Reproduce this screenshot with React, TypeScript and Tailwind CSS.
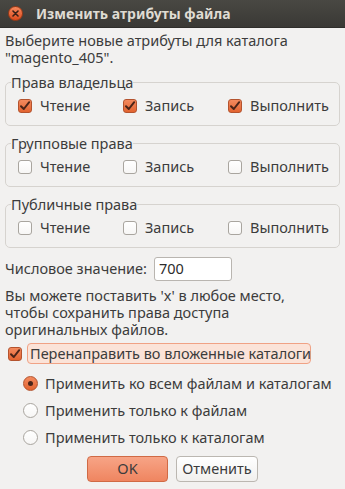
import React from "react";

const font = { fontFamily: '"Noto Sans", "Open Sans", sans-serif' };

function Check({ checked }: { checked: boolean }) {
  if (checked) {
    return (
      <span className="inline-flex w-[14px] h-[14px] shrink-0 rounded-[3px] border border-[#b4532e] bg-gradient-to-b from-[#f38a5e] to-[#e2632f] items-center justify-center">
        <svg width="12" height="12" viewBox="0 0 12 12">
          <path d="M2 6.2 L4.8 9 L10.2 2.2" fill="none" stroke="#4a2418" strokeWidth="2" strokeLinecap="round" strokeLinejoin="round" />
        </svg>
      </span>
    );
  }
  return (
    <span className="inline-block w-[14px] h-[14px] shrink-0 rounded-[3px] border border-[#a9a59f] bg-gradient-to-b from-[#ffffff] to-[#f7f6f5]" />
  );
}

function Radio({ checked }: { checked: boolean }) {
  if (checked) {
    return (
      <span className="inline-flex w-[15px] h-[15px] shrink-0 rounded-full border border-[#b4532e] bg-gradient-to-b from-[#f38a5e] to-[#e2632f] items-center justify-center">
        <span className="w-[5px] h-[5px] rounded-full bg-[#4a2418]" />
      </span>
    );
  }
  return (
    <span className="inline-block w-[15px] h-[15px] shrink-0 rounded-full border border-[#a9a59f] bg-gradient-to-b from-[#ffffff] to-[#f7f6f5]" />
  );
}

function Group({ title, checked }: { title: string; checked: boolean }) {
  const items = [
    { label: "Чтение", w: "w-[105px]" },
    { label: "Запись", w: "w-[105px]" },
    { label: "Выполнить", w: "" },
  ];
  return (
    <fieldset className="border border-[#d6d3cf] rounded-[5px] mx-[5px] pl-[12px] pt-[7px] pb-[10px]">
      <legend className="ml-[-7px] px-0 leading-[16px]">{title}</legend>
      <div className="flex items-center h-[18px]">
        {items.map((it) => (
          <div key={it.label} className={`flex items-center gap-[8px] ${it.w}`}>
            <Check checked={checked} />
            <span>{it.label}</span>
          </div>
        ))}
      </div>
    </fieldset>
  );
}

export default function App() {
  return (
    <div style={font} className="w-[345px] h-[489px] bg-[#f2f1f0] text-[#3c3c3c] text-[14.5px] whitespace-nowrap flex flex-col overflow-hidden">
      <div className="h-[28px] shrink-0 flex items-center bg-gradient-to-b from-[#494843] to-[#3a3935] border-b border-[#2f2e2b]">
        <span className="ml-[8px] w-[15px] h-[15px] rounded-full bg-gradient-to-b from-[#f6875b] to-[#dc4a1a] border border-[#9b3a16] flex items-center justify-center">
          <svg width="7" height="7" viewBox="0 0 7 7">
            <path d="M1 1 L6 6 M6 1 L1 6" stroke="#3b2016" strokeWidth="1.6" strokeLinecap="round" />
          </svg>
        </span>
        <span className="ml-[13px] font-bold text-[14px] text-[#dfdbd2]">Изменить атрибуты файла</span>
      </div>

      <div className="px-[5px] pt-[4px] leading-[17px]">
        <div>Выберите новые атрибуты для каталога</div>
        <div>"magento_405".</div>
      </div>

      <div className="mt-[8px] flex flex-col gap-[9px]">
        <Group title="Права владельца" checked={true} />
        <Group title="Групповые права" checked={false} />
        <Group title="Публичные права" checked={false} />
      </div>

      <div className="mt-[9px] px-[5px] flex items-center">
        <span>Числовое значение:</span>
        <div className="ml-[7px] w-[78px] h-[24px] rounded-[3px] border border-[#b9b5b0] bg-white flex items-center pl-[4px] text-[#2c2c2c]">
          700
        </div>
      </div>

      <div className="mt-[6px] px-[5px] leading-[17px]">
        <div>Вы можете поставить 'x' в любое место,</div>
        <div>чтобы сохранить права доступа</div>
        <div>оригинальных файлов.</div>
      </div>

      <div className="mt-[5px] pl-[8px] flex items-center h-[21px]">
        <Check checked={true} />
        <span className="ml-[5px] h-[21px] w-[284px] rounded-[4px] border border-[#f0a285] bg-[#fbe3d8] flex items-center pl-[2px] whitespace-nowrap">
          Перенаправить во вложенные каталоги
        </span>
      </div>

      <div className="mt-[6px] pl-[23px] flex flex-col">
        {[
          { t: "Применить ко всем файлам и каталогам", c: true },
          { t: "Применить только к файлам", c: false },
          { t: "Применить только к каталогам", c: false },
        ].map((r) => (
          <div key={r.t} className="h-[27px] flex items-center gap-[7px]">
            <Radio checked={r.c} />
            <span>{r.t}</span>
          </div>
        ))}
      </div>

      <div className="mt-[5px] flex justify-center gap-[8px]">
        <div className="w-[81px] h-[26px] rounded-[4px] border border-[#d06a45] bg-gradient-to-b from-[#f7a486] to-[#ef8560] flex items-center justify-center text-[#3c3c3c]">
          OK
        </div>
        <div className="w-[82px] h-[26px] rounded-[4px] border border-[#bbb7b1] bg-gradient-to-b from-[#ffffff] to-[#f1f0ee] flex items-center justify-center">
          Отменить
        </div>
      </div>
    </div>
  );
}
